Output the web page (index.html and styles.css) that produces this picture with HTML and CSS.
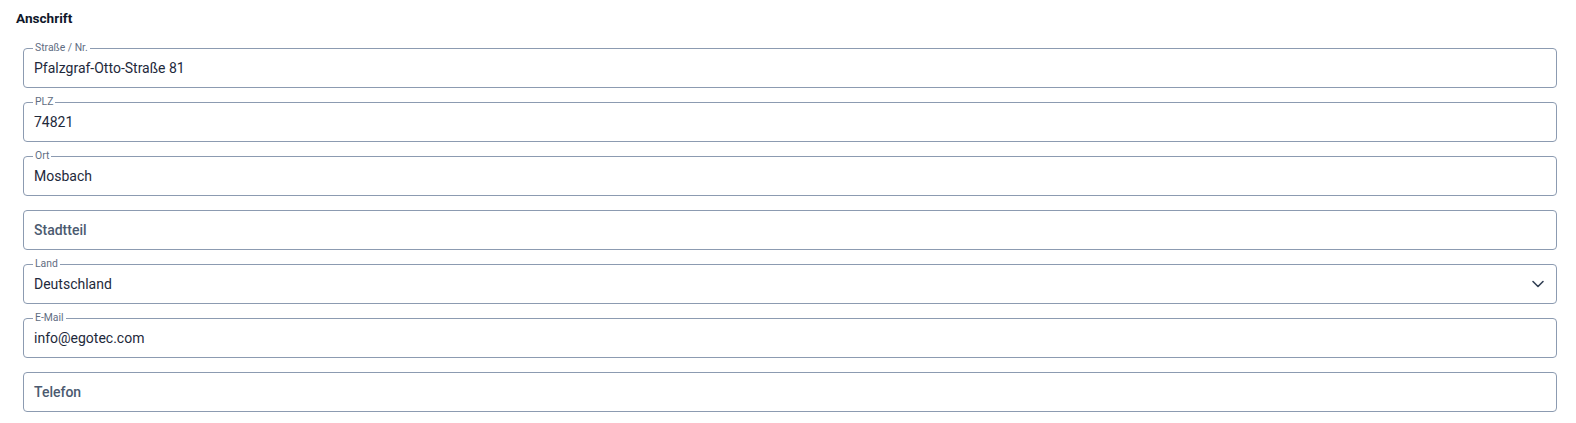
FILE: index.html
```html
<!DOCTYPE html>
<html lang="de">
<head>
<meta charset="utf-8">
<title>Anschrift</title>
<link rel="stylesheet" href="styles.css">
</head>
<body>
<section class="section">
  <h2 class="section-title">Anschrift</h2>
  <div class="fields">
    <div class="field">
      <span class="field-label">Straße / Nr.</span>
      <span class="field-value">Pfalzgraf-Otto-Straße 81</span>
    </div>
    <div class="field">
      <span class="field-label">PLZ</span>
      <span class="field-value">74821</span>
    </div>
    <div class="field">
      <span class="field-label">Ort</span>
      <span class="field-value">Mosbach</span>
    </div>
    <div class="field">
      <span class="field-placeholder">Stadtteil</span>
    </div>
    <div class="field field-select">
      <span class="field-label">Land</span>
      <span class="field-value">Deutschland</span>
      <svg class="chevron" width="14" height="14" viewBox="0 0 14 14" aria-hidden="true">
        <path d="M2 4.5 L7 9.5 L12 4.5" fill="none" stroke="#334155" stroke-width="1.6" stroke-linecap="round" stroke-linejoin="round"/>
      </svg>
    </div>
    <div class="field">
      <span class="field-label">E-Mail</span>
      <span class="field-value">info@egotec.com</span>
    </div>
    <div class="field">
      <span class="field-placeholder">Telefon</span>
    </div>
  </div>
</section>
</body>
</html>
```
FILE: styles.css
```css
html, body {
  margin: 0;
  padding: 0;
  background: #ffffff;
}
body {
  font-family: Roboto, "Liberation Sans", Arial, sans-serif;
  color: #1e293b;
}
.section {
  padding: 10px 19px 0 16px;
}
.section-title {
  margin: 0 0 22px 0;
  font-size: 13.6px;
  font-weight: 700;
  line-height: 16px;
  color: #0f172a;
}
.fields {
  display: flex;
  flex-direction: column;
  gap: 14px;
  padding-left: 7px;
}
.field {
  position: relative;
  display: flex;
  align-items: center;
  height: 40px;
  box-sizing: border-box;
  border: 1px solid #8c9bb1;
  border-radius: 4px;
  padding: 0 10px;
}
.field-label {
  position: absolute;
  top: -7px;
  left: 9px;
  padding: 0 2px;
  background: #ffffff;
  font-size: 10.4px;
  line-height: 12px;
  color: #5f6d82;
}
.field-value {
  font-size: 14px;
  color: #1e293b;
}
.field-placeholder {
  font-size: 14px;
  font-weight: 500;
  color: #4b5a70;
}
.field-select {
  justify-content: space-between;
}
.chevron {
  margin-right: 1px;
}
```
